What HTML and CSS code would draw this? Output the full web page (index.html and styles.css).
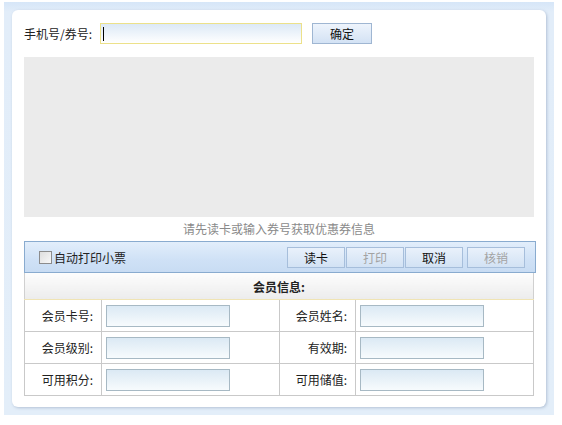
FILE: index.html
```html
<!DOCTYPE html>
<html>
<head>
<meta charset="utf-8">
<link rel="stylesheet" href="styles.css">
</head>
<body>
<div class="frame">
  <div class="card">
    <div class="search-row">
      <span class="search-label">手机号/券号:</span>
      <div class="search-input"><span class="caret"></span></div>
      <button class="btn ok-btn">确定</button>
    </div>
    <div class="coupon-area"></div>
    <div class="hint">请先读卡或输入券号获取优惠券信息</div>
    <div class="toolbar">
      <label class="auto-print"><span class="checkbox"></span>自动打印小票</label>
      <div class="tool-btns">
        <button class="btn tool-btn">读卡</button>
        <button class="btn tool-btn disabled">打印</button>
        <button class="btn tool-btn">取消</button>
        <button class="btn tool-btn disabled last">核销</button>
      </div>
    </div>
    <table class="info">
      <colgroup>
        <col class="c-lbl1"><col class="c-val"><col class="c-lbl2"><col class="c-val">
      </colgroup>
      <tr><th colspan="4">会员信息:</th></tr>
      <tr>
        <td class="lbl">会员卡号:</td><td class="val"><div class="field"></div></td>
        <td class="lbl">会员姓名:</td><td class="val"><div class="field"></div></td>
      </tr>
      <tr>
        <td class="lbl">会员级别:</td><td class="val"><div class="field"></div></td>
        <td class="lbl">有效期:</td><td class="val"><div class="field"></div></td>
      </tr>
      <tr>
        <td class="lbl">可用积分:</td><td class="val"><div class="field"></div></td>
        <td class="lbl">可用储值:</td><td class="val"><div class="field"></div></td>
      </tr>
    </table>
  </div>
</div>
</body>
</html>
```
FILE: styles.css
```css
html, body {
  margin: 0;
  padding: 0;
  background: #fff;
  font-family: "Noto Sans CJK SC", "Noto Sans", sans-serif;
  font-size: 12px;
  color: #222;
}
.frame {
  margin: 2px 0 0 4px;
  width: 550px;
  height: 413px;
  box-sizing: border-box;
  padding: 8px 8px 8px 8px;
  background: linear-gradient(#d6e6f8, #e2edf9 10px, #e3eef9);
}
.card {
  width: 534px;
  height: 397px;
  box-sizing: border-box;
  background: #fff;
  border-radius: 6px;
  box-shadow: 1px 1px 3px rgba(120,140,170,0.45);
  padding: 13px 10px 0 12px;
}
.search-row {
  display: flex;
  align-items: center;
  height: 21px;
}
.search-label {
  width: 76px;
  line-height: 21px;
}
.search-input {
  width: 202px;
  height: 21px;
  box-sizing: border-box;
  border: 1px solid #ece18a;
  background: linear-gradient(#dce9f6, #fff);
  display: flex;
  align-items: center;
  padding-left: 2px;
}
.caret {
  width: 1px;
  height: 14px;
  background: #000;
}
.btn {
  font-family: "Noto Sans CJK SC", "Noto Sans", sans-serif;
  font-size: 12px;
  color: #111;
  border: 1px solid #9fb6d2;
  background: linear-gradient(#eef4fc, #d3e2f4);
  padding: 0;
  margin: 0;
}
.ok-btn {
  margin-left: 10px;
  width: 60px;
  height: 21px;
}
.coupon-area {
  margin-top: 13px;
  width: 510px;
  height: 160px;
  background: #ebebeb;
}
.hint {
  width: 510px;
  height: 24px;
  line-height: 24px;
  text-align: center;
  color: #8a8a8a;
}
.toolbar {
  width: 512px;
  height: 32px;
  box-sizing: border-box;
  border: 1px solid #89abcf;
  background: linear-gradient(#e2eefb, #cfe1f6 60%, #c8dcf3);
  display: flex;
  align-items: center;
  justify-content: space-between;
  padding: 0 10px 0 14px;
}
.auto-print {
  display: flex;
  align-items: center;
  line-height: 14px;
  margin-top: 2px;
}
.checkbox {
  width: 11px;
  height: 11px;
  border: 1px solid #8c8c8c;
  background: linear-gradient(135deg, #dedede, #f8f8f8);
  margin-right: 2px;
  margin-top: -2px;
}
.tool-btns {
  display: flex;
  gap: 1px;
  margin-top: 1px;
}
.tool-btn {
  width: 58px;
  height: 21px;
  border-color: #a6bedb;
  background: linear-gradient(#e9f1fb, #d2e2f4);
}
.tool-btn.last {
  margin-left: 3px;
}
.tool-btn.disabled {
  color: #a3a3a3;
}
.info {
  width: 510px;
  border-collapse: collapse;
  table-layout: fixed;
}
.c-lbl1 { width: 77px; }
.c-lbl2 { width: 76px; }
.c-val { width: 178px; }
.info th {
  height: 26px;
  padding: 0;
  font-weight: bold;
  text-align: center;
  border: 1px solid #d0d0d0;
  border-top: none;
  border-bottom: 1px solid #f0e4b4;
  background: linear-gradient(#fdfdfd, #ececec);
}
.info td {
  border: 1px solid #c9c9c9;
  height: 31px;
  padding: 0;
}
.info td.lbl {
  text-align: right;
  padding-right: 8px;
}
.info td.val {
  padding-left: 4px;
}
.field {
  width: 124px;
  height: 22px;
  box-sizing: border-box;
  border: 1px solid #a7b9c4;
  background: linear-gradient(#dbe9f4, #f7fbfd);
}
```
